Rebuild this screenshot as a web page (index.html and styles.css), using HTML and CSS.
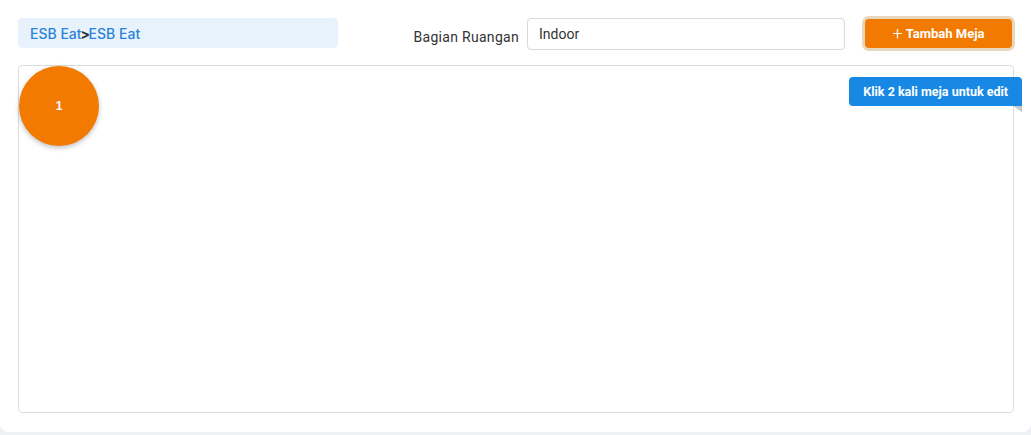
FILE: index.html
```html
<!DOCTYPE html>
<html>
<head>
<meta charset="utf-8">
<link rel="stylesheet" href="styles.css">
</head>
<body>
<div class="card">
  <div class="header">
    <div class="crumb"><span class="crumb-link">ESB Eat</span><span class="crumb-sep">&gt;</span><span class="crumb-link">ESB Eat</span></div>
    <div class="spacer"></div>
    <label class="field-label">Bagian Ruangan</label>
    <div class="input">Indoor</div>
    <button class="btn"><span class="plus">+</span>Tambah Meja</button>
  </div>
  <div class="canvas">
    <div class="table-node">1</div>
    <div class="ribbon">Klik 2 kali meja untuk edit</div>
  </div>
</div>
</body>
</html>
```
FILE: styles.css
```css
html, body { margin: 0; padding: 0; }
body { background: #eef0f4; width: 1031px; height: 435px; overflow: hidden; font-family: Inter, "Noto Sans", sans-serif; }
.card { background: #fff; height: 432px; box-sizing: border-box; padding: 18px 17px 0 18px; border-radius: 0 0 8px 8px; }
.header { display: flex; align-items: flex-start; height: 32px; }
.crumb { width: 320px; height: 30px; box-sizing: border-box; background: #e8f2fd; border-radius: 4px; padding: 0 12px; display: flex; align-items: center; font-family: Inter, sans-serif; font-size: 14px; font-weight: 500; color: #2a83da; }
.crumb-sep { color: #333; font-weight: 700; letter-spacing: -1.5px; margin-left: -1px; }
.spacer { flex: 1; }
.field-label { font-family: Roboto, sans-serif; font-size: 14px; letter-spacing: 0.3px; color: #333; line-height: 20px; margin-top: 9px; margin-right: 8px; }
.input { width: 318px; height: 32px; box-sizing: border-box; border: 1px solid #d9d9d9; border-radius: 4px; padding: 0 11px; font-family: Roboto, sans-serif; font-size: 14px; color: #333; line-height: 30px; margin-right: 20px; }
.btn { width: 147px; height: 29px; margin-top: 1px; margin-right: 2px; background: #f27a00; color: #fff; border: none; border-radius: 4px; box-shadow: 0 0 0 3px #e6d7bd; font-family: Roboto, sans-serif; font-weight: 700; font-size: 13px; display: flex; align-items: center; justify-content: center; padding: 0; }
.plus { font-weight: 300; font-size: 18px; margin-right: 3px; line-height: 1; }
.canvas { position: relative; margin-top: 15px; height: 348px; box-sizing: border-box; border: 1px solid #dcdcdc; border-radius: 4px; }
.table-node { position: absolute; left: 0; top: 0; width: 80px; height: 80px; border-radius: 50%; background: #f27a00; color: #fff; font-family: "Liberation Sans", Arial, sans-serif; font-weight: 700; font-size: 12px; display: flex; align-items: center; justify-content: center; box-shadow: 0 2px 5px rgba(0,0,0,0.25); }
.ribbon { position: absolute; top: 11px; right: -9px; height: 29px; padding: 0 14px; background: #1789e4; color: #fff; font-family: Roboto, sans-serif; font-weight: 700; font-size: 12.5px; line-height: 29px; border-radius: 4px 4px 0 4px; }
.ribbon::after { content: ""; position: absolute; right: 0; top: 29px; border-style: solid; border-width: 0 9px 6px 0; border-color: transparent #c8c8c8 transparent transparent; }
```
